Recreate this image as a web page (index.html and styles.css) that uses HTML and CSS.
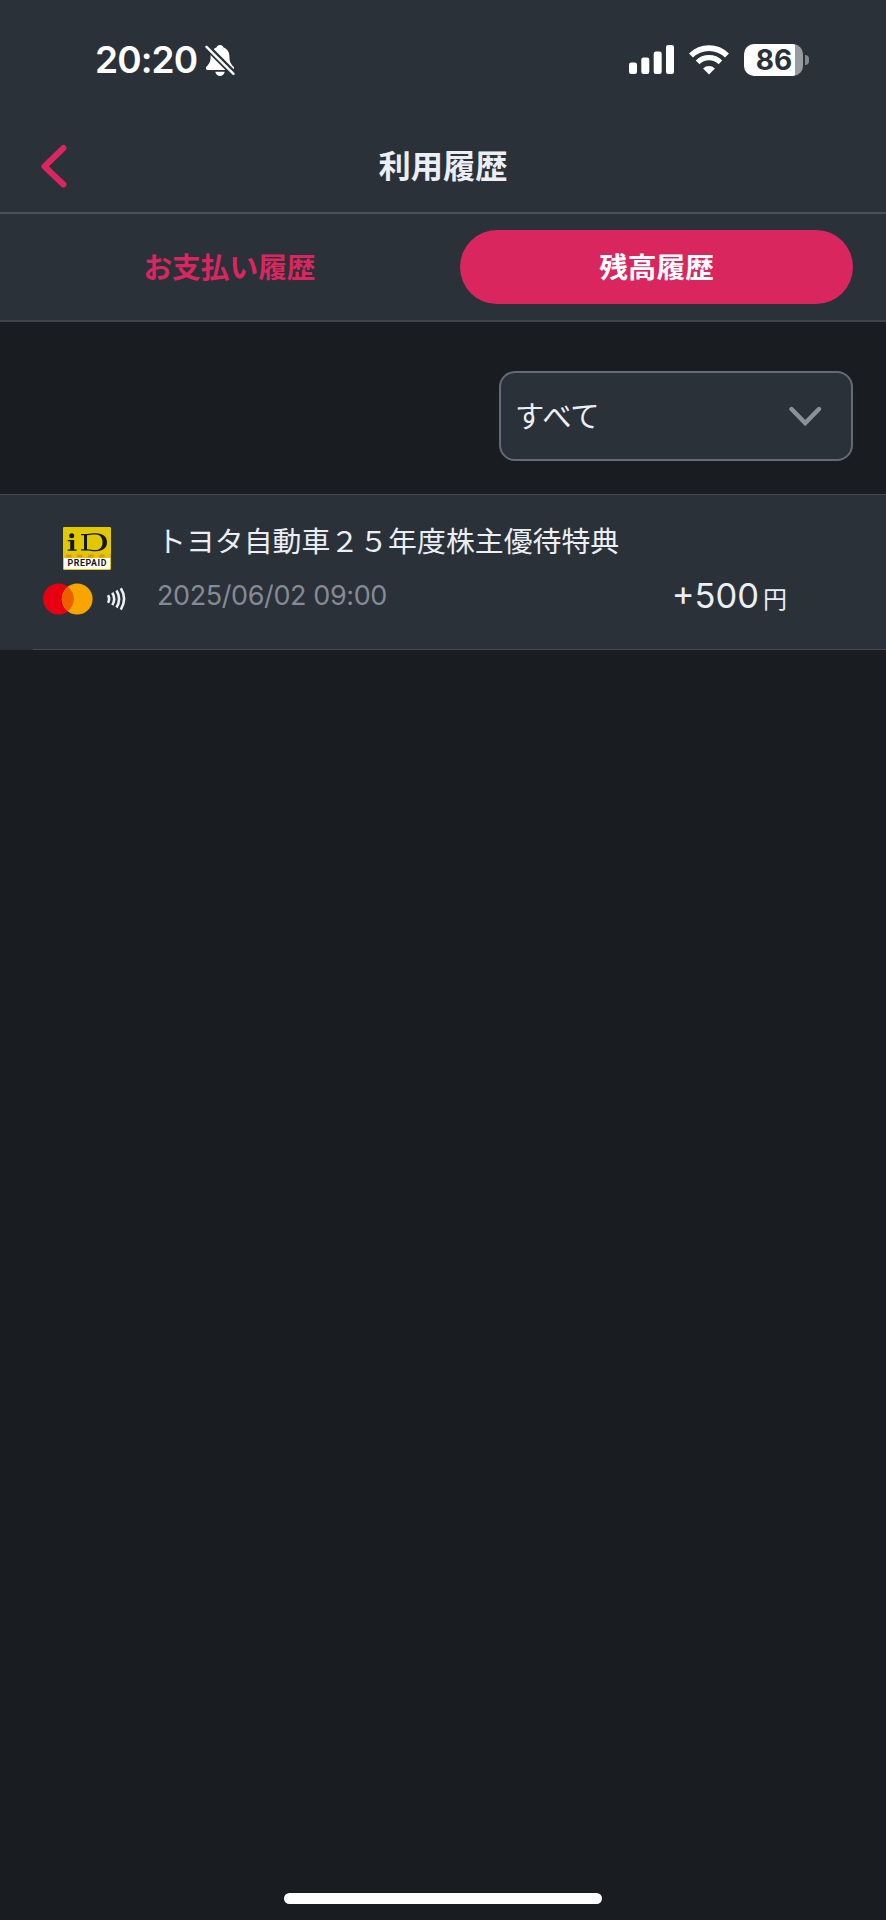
FILE: index.html
```
<!DOCTYPE html>
<html lang="ja">

<head>
    <meta charset="utf-8">
    <title>利用履歴</title>
    <link rel="stylesheet" href="styles.css">
</head>

<body>
    <div class="status-bar">
        <div class="status-left">
            <span class="time">20:20</span>
            <svg class="bell" width="30" height="33" viewBox="0 0 30 33">
                <path fill="#fff" d="M15 1c-1.900 0-3.200 1.200-3.500 2.600C7.500 5 5.600 8.300 5.600 12.500c0 5.500-1.600 7.500-3.800 9.700C.4 23.700.8 26 3 26h24c2.200 0 2.600-2.300 1.200-3.800-2.200-2.200-3.800-4.200-3.800-9.700 0-4.200-1.900-7.500-5.900-8.900C18.200 2.200 16.900 1 15 1zM10.300 27.800h9.400c-.4 2.500-2.300 4.200-4.700 4.200s-4.300-1.700-4.700-4.200z" />
                <path stroke="#2b3138" stroke-width="6.500" d="M0 1l30 30" />
                <path stroke="#fff" stroke-width="2.400" stroke-linecap="round" d="M1.500 2.800l27 27" />
            </svg>
        </div>
        <div class="status-right">
            <svg width="46" height="30" viewBox="0 0 46 30" fill="#fff">
                <rect x="0" y="17.500" width="8" height="11.500" rx="2.200" />
                <rect x="12.300" y="12.500" width="8" height="16.500" rx="2.200" />
                <rect x="24.700" y="6.500" width="8" height="22.500" rx="2.200" />
                <rect x="37" y="0" width="8" height="29" rx="2.200" />
            </svg>
            <svg class="wifi" width="40" height="30" viewBox="0 0 40 30" fill="none" stroke="#fff">
                <path stroke-width="5.600" d="M2 10.600a25.500 25.500 0 0 1 36 0" />
                <path stroke-width="5.200" d="M8.600 17.400a16.200 16.200 0 0 1 22.800 0" />
                <path fill="#fff" stroke="none" d="M20 29.400l-5.900-6a8.600 8.600 0 0 1 11.800 0z" />
            </svg>
            <div class="battery">
                <div class="battery-body">86</div>
                <div class="battery-cap"></div>
            </div>
        </div>
    </div>

    <div class="header">
        <svg class="back" width="32" height="44" viewBox="0 0 32 44">
            <path d="M24.500 4L5.500 22.500L24.500 40.500" fill="none" stroke="#d9265f" stroke-width="6" stroke-linecap="round" stroke-linejoin="round" />
        </svg>
        <h1 class="title">利用履歴</h1>
    </div>

    <div class="tabs">
        <div class="tab">お支払い履歴</div>
        <div class="tab active">残高履歴</div>
    </div>

    <div class="filter">
        <div class="select">
            <span class="select-value">すべて</span>
            <svg width="34" height="22" viewBox="0 0 34 22">
                <path d="M3.500 4L17.200 18L31 4" fill="none" stroke="#8b919c" stroke-width="4.400" stroke-linecap="round" />
            </svg>
        </div>
    </div>

    <div class="history-item">
        <div class="logos">
            <svg class="id-logo" width="48" height="43" viewBox="0 0 48 43">
                <rect x="0" y="0" width="48" height="43" rx="2" fill="#fff" />
                <path d="M2 0h44a2 2 0 0 1 2 2v29H0V2a2 2 0 0 1 2-2z" fill="#e2c800" />
                <path d="M0 27.500h48V31H0z" fill="#efbd00" />
                <path d="M3 29h45" stroke="#c8a018" stroke-width="3" stroke-dasharray="5.500 5.500" />
                <path d="M.5 30v11a1.500 1.500 0 0 0 1.500 1.500h44a1.500 1.500 0 0 0 1.500-1.500V30" fill="none" stroke="#e2c800" />
                <g fill="#15181a">
                    <circle cx="8.700" cy="8.700" r="2.500" />
                    <path d="M4.800 13h6.400v9.500h2.400v1.300H4.800v-1.300h2.400v-8.200H4.800z" />
                    <path fill-rule="evenodd" d="M18 7h6c3 0 5-.7 9-.7 7 0 11 3.600 11 9s-4 9-11 9c-4 0-6-.8-9-.8h-6v-1.200h3V8.200h-3zM24 8.200v14.100c3.500 0 5.500.8 8.500.8 4.500 0 7-3 7-7.800s-2.500-7.800-7-7.800c-3 0-5 .7-8.500.7z" />
                </g>
                <text class="prepaid" x="24" y="39.300" text-anchor="middle" textLength="39">PREPAID</text>
            </svg>
            <div class="card-logos">
                <svg width="50" height="32" viewBox="0 0 50 32">
                    <circle cx="15.500" cy="16" r="15.400" fill="#e60012" />
                    <circle cx="34.200" cy="16" r="15.400" fill="#f8a500" />
                    <path d="M24.850 3.760a15.400 15.400 0 0 1 0 24.480a15.400 15.400 0 0 1 0-24.480z" fill="#ed6000" />
                </svg>
                <svg width="20" height="24" viewBox="0 0 20 24" fill="none" stroke="#eceff4" stroke-width="2.600">
                    <path d="M1 8.200q2.200 3.700 0 7.600M5.300 5.800q3.800 6 0 12.400M9.500 3.500q5.200 8.300 0 17M13.800 1.300q6.600 10.400 0 21.400" />
                </svg>
            </div>
        </div>
        <div class="details">
            <div class="item-title">トヨタ自動車２５年度株主優待特典</div>
            <div class="item-row">
                <span class="date">2025/06/02 09:00</span>
                <span class="amount">+500<span class="yen">円</span></span>
            </div>
        </div>
    </div>

    <div class="home-indicator"></div>
</body>

</html>
```

FILE: styles.css
```
* {
    box-sizing: border-box;
}

body {
    margin: 0;
    height: 1920px;
    display: flex;
    flex-direction: column;
    background-color: #191c20;
    color: #ebeef5;
    font-family: Inter, "Noto Sans CJK JP", sans-serif;
    overflow: hidden;
}

svg {
    display: block;
    flex-shrink: 0;
}

.status-bar {
    height: 120px;
    display: flex;
    justify-content: space-between;
    align-items: center;
    padding: 0 77px 0 95px;
    background-color: #2b3138;
    color: #fff;
}

.status-left,
.status-right {
    display: flex;
    align-items: center;
}

.time {
    font-size: 37px;
    font-weight: 600;
    line-height: 40px;
    letter-spacing: -0.9px;
}

.bell {
    margin-left: 8px;
}

.wifi {
    margin: 0 15px 0 14px;
}

.battery {
    display: flex;
    align-items: center;
}

.battery-body {
    width: 59px;
    height: 32px;
    padding-left: 1px;
    border-radius: 10px;
    background: linear-gradient(to right, #fff 51px, #989b9f 51px);
    color: #2b3138;
    font-size: 28px;
    font-weight: 700;
    line-height: 32px;
    text-align: center;
}

.battery-cap {
    width: 4px;
    height: 10px;
    margin-left: 2px;
    border-radius: 0 5px 5px 0;
    background-color: #83878c;
}

.header {
    height: 94px;
    display: grid;
    grid-template-columns: 120px 1fr 120px;
    align-items: center;
    background-color: #2b3138;
    border-bottom: 2px solid #4b525a;
}

.back {
    margin-left: 39px;
}

.title {
    margin: 0;
    padding-top: 1px;
    font-size: 32.3px;
    font-weight: 700;
    line-height: 40px;
    text-align: center;
}

.tabs {
    height: 108px;
    display: grid;
    grid-template-columns: 1fr 1fr;
    gap: 34px;
    padding: 16px 33px;
    background-color: #2b3138;
    border-bottom: 2px solid #3d444c;
}

.tab {
    height: 74px;
    border-radius: 37px;
    color: #d9265f;
    font-size: 28.7px;
    font-weight: 700;
    line-height: 75px;
    text-align: center;
}

.tab.active {
    background-color: #d9265f;
    color: #fff;
}

.filter {
    height: 172px;
    display: flex;
    justify-content: flex-end;
    padding: 49px 33px 0 0;
}

.select {
    width: 354px;
    height: 90px;
    display: flex;
    justify-content: space-between;
    align-items: center;
    padding: 0 29px 0 14px;
    border: 2px solid #646b76;
    border-radius: 16px;
    background-color: #2b3138;
    font-size: 29.3px;
}

.select-value {
    padding-bottom: 4px;
}

.history-item {
    height: 156px;
    display: flex;
    border-top: 1px solid #444b54;
    background: linear-gradient(#444b54, #444b54) 33px 100% / 100% 1px no-repeat, #2b3138;
}

.logos {
    width: 157px;
    padding: 32px 0 0 43px;
}

.id-logo {
    margin-left: 20px;
}

.prepaid {
    font-family: Roboto, sans-serif;
    font-size: 8.8px;
    font-weight: 700;
    fill: #15181a;
}

.card-logos {
    display: flex;
    align-items: center;
    gap: 14px;
    margin-top: 13px;
}

.details {
    flex: 1;
    padding: 27px 99px 0 0;
}

.item-title {
    font-size: 28.9px;
    line-height: 40px;
    white-space: nowrap;
}

.item-row {
    display: flex;
    justify-content: space-between;
    margin-top: 12px;
    line-height: 44px;
}

.date {
    color: #848a96;
    font-size: 27px;
    letter-spacing: -0.4px;
}

.amount {
    font-size: 34.5px;
}

.yen {
    margin-left: 4px;
    font-size: 24px;
}

.home-indicator {
    width: 318px;
    height: 11px;
    margin: auto auto 16px;
    border-radius: 6px;
    background-color: #fff;
}
```
